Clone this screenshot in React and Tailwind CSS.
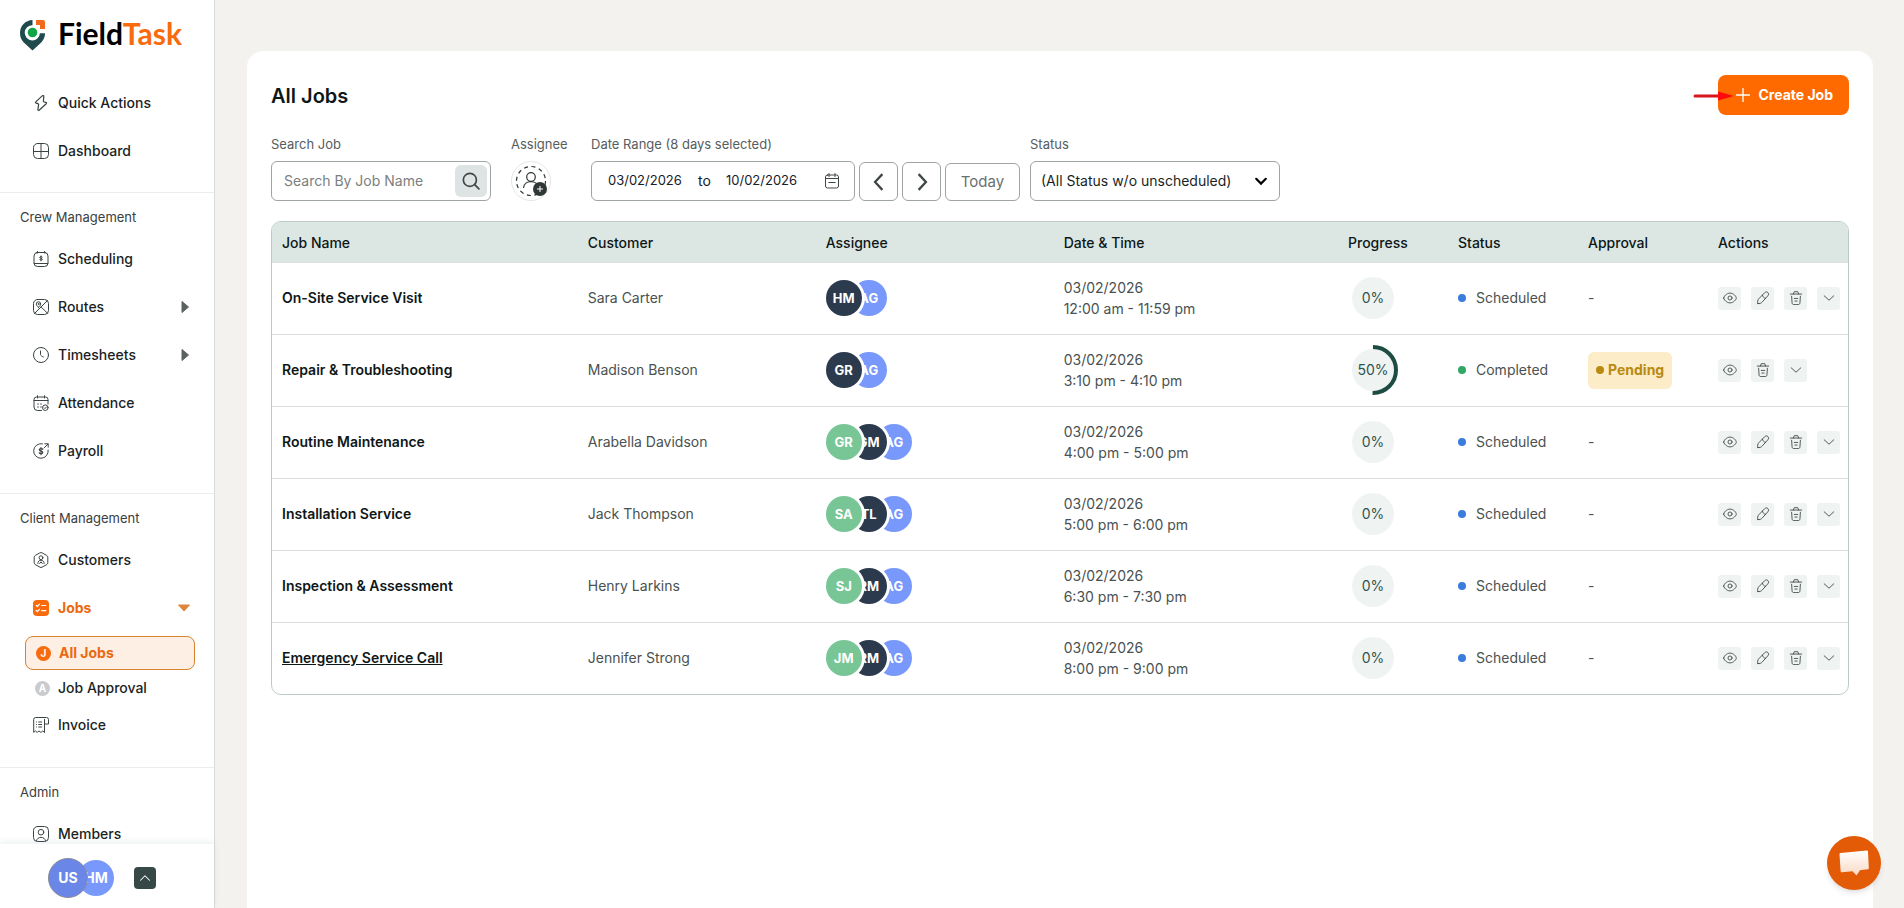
import { useState } from 'react';
import clsx from 'clsx';

/* ---------- Icons ---------- */

function Icon({ children, size = 16, className }) {
  return (
    <svg
      width={size}
      height={size}
      viewBox="0 0 16 16"
      fill="none"
      stroke="currentColor"
      strokeWidth="1"
      strokeLinecap="round"
      strokeLinejoin="round"
      className={clsx('shrink-0', className)}
      aria-hidden="true"
    >
      {children}
    </svg>
  );
}

const BoltIcon = () => (
  <Icon>
    <path
      strokeWidth="1.200"
      d="M9.200.9 2.800 6.900c-.5.5-.3 1.100.3 1.300l1.900.5c.5.1.7.5.6 1L4.900 14.300c-.2 1 .7 1.400 1.500.7l6.800-6.300c.5-.5.4-1.100-.3-1.300l-1.900-.4c-.5-.1-.7-.5-.6-1L10.800 1.600c.1-1-.9-1.400-1.600-.7Z"
    />
  </Icon>
);

const GridIcon = () => (
  <Icon>
    <rect x=".5" y=".5" width="15" height="15" rx="4" />
    <path d="M8 .5v15M.5 8.500h15" />
  </Icon>
);

const ScheduleIcon = () => (
  <Icon>
    <rect x="1" y="1.500" width="14" height="14" rx="3.500" />
    <path d="M1.200 12.500h13.600M3.500 1.500h2M10.500 1.500h2M4.500.5v1.500M11.500.5v1.500" />
    <path d="M9.300 6c-.3-.6-2.600-.7-2.600.4 0 1.200 2.700.7 2.700 1.900 0 1.100-2.500 1-2.800.3M8 5v4.800" />
  </Icon>
);

const RoutesIcon = () => (
  <Icon>
    <rect x=".5" y=".5" width="15" height="15" rx="4" />
    <path d="M1.800 14.200 14.200 1.800M8.200 8l6.300 6.300" />
    <path d="M5.500 8.300C4.300 7.300 3.300 6.300 3.300 5a2.200 2.200 0 0 1 4.400 0c0 1.300-1 2.300-2.200 3.300Z" />
    <circle cx="5.500" cy="5" r=".5" />
  </Icon>
);

const ClockIcon = () => (
  <Icon>
    <circle cx="8" cy="8" r="7.500" />
    <path d="M7.500 4v3.700c0 .8 2 1.800 2.900 2.300" />
  </Icon>
);

const AttendanceIcon = () => (
  <Icon>
    <path d="M8.500 15.500h-4A3.500 3.500 0 0 1 1 12V4.500A2.500 2.500 0 0 1 3.500 2h9A2.500 2.500 0 0 1 15 4.500V9M1 5.500h14M4.500.7V3M11.500.7V3" />
    <path strokeWidth="1.400" d="M5 9h.01M8 9h.01M5 12h.01M8 12h.01" />
    <circle cx="12.300" cy="12.700" r="2.800" />
    <path d="m11.200 12.800.8.800 1.500-1.700" />
  </Icon>
);

const PayrollIcon = () => (
  <Icon>
    <path d="M9.500.8A7.300 7.300 0 1 0 15.200 7M11 5l4-4M11.800.8H15.200V4.200" />
    <path strokeWidth="1.200" d="M9.800 6.300C9.400 5.200 6.300 5.100 6.300 6.800c0 1.800 3.500.9 3.500 2.700 0 1.600-3.200 1.500-3.600.2M8 4.500v7.200" />
  </Icon>
);

const CustomerIcon = () => (
  <Icon>
    <path d="M7 .8a2 2 0 0 1 2 0l4.800 2.700a2 2 0 0 1 1 1.700v5.600a2 2 0 0 1-1 1.700L9 15.200a2 2 0 0 1-2 0l-4.800-2.700a2 2 0 0 1-1-1.700V5.200a2 2 0 0 1 1-1.700Z" />
    <circle cx="8" cy="5.700" r="1.900" />
    <path d="M4.800 11.500c0-4.500 6.400-4.500 6.400 0M6.700 11.500 8 9.800l1.300 1.700" />
  </Icon>
);

const JobsIcon = () => (
  <svg width="16" height="16" viewBox="0 0 16 16" className="shrink-0" aria-hidden="true">
    <rect width="16" height="16" rx="4" fill="#f96a0c" />
    <path
      d="m3.200 5.300 1.200 1.200 2-2.300M8.500 5.500h4.300M3.200 10.500l1.200 1.200 2-2.300M8.500 10.700h4.300"
      fill="none"
      stroke="#fff"
      strokeWidth="1.200"
      strokeLinecap="round"
    />
  </svg>
);

const InvoiceIcon = () => (
  <Icon>
    <path d="M11.500 15.300 9.700 14l-1.800 1.400L6 14l-1.800 1.400L2.500 14 .7 15.300V2.500a2 2 0 0 1 2-2h10.800a2 2 0 0 1 2 2V7h-4V2.500M11.500 2.500v12.800" />
    <path d="M3.500 5h.01M3.500 7.500h.01M3.500 10h.01M5.700 5h3M5.700 7.500h3M5.700 10h3" />
  </Icon>
);

const MemberIcon = () => (
  <Icon>
    <rect x=".5" y=".5" width="15" height="15" rx="4" />
    <circle cx="8" cy="6.200" r="2.800" />
    <path d="M3.500 15c.4-5 8.600-5 9 0" />
  </Icon>
);

const LetterIcon = ({ letter, active }) => (
  <span
    className={clsx(
      'flex size-[15px] items-center justify-center rounded-full text-[10px] font-bold text-white',
      active ? 'bg-[#f96a0c]' : 'bg-[#c9cbcd]'
    )}
  >
    {letter}
  </span>
);

const EyeIcon = () => (
  <Icon size={14}>
    <path d="M.8 8c0-1.700 3.200-5.600 7.200-5.600s7.200 3.900 7.200 5.600-3.200 5.600-7.200 5.600S.8 9.700.8 8Z" />
    <circle cx="8" cy="8" r="2.300" />
  </Icon>
);

const PenIcon = () => (
  <Icon size={14}>
    <path d="M2.200 14.400c-.8-2.300-.3-4.200 1-5.500l6.600-6.900c1.200-1.200 2.600-1.300 3.700-.3s1.100 2.600 0 3.800L7.100 12.600c-1.300 1.500-2.900 2-4.900 1.800ZM7.300 4.800c.5 2 1.600 3.200 3.700 3.700" />
  </Icon>
);

const TrashIcon = () => (
  <Icon size={14}>
    <path d="M1.500 3.500h13M5 3.500 6 .8h4l1 2.700M3 6l.5 7.500c.1 1.300.8 2 2 2h5c1.200 0 1.900-.7 2-2L13 6M6 8.500h4M6.700 11.500h2.600" />
  </Icon>
);

const DownIcon = () => (
  <Icon size={14}>
    <path d="m2.500 5.500 5.500 5 5.500-5" />
  </Icon>
);

const LogoMark = () => (
  <svg width="26" height="31" viewBox="0 0 26 31" aria-hidden="true">
    <path
      d="M12.500 0v5.200a7.600 7.600 0 1 0 7.400 8h5.100c0 4-1.300 6.500-3.500 9L12.500 30.500 3.500 22.200C1.300 19.700 0 17 0 13 0 5.800 5.300.3 12.500 0Z"
      fill="#204b4d"
    />
    <circle cx="12.500" cy="12.500" r="4.800" fill="#10a648" />
    <path d="M16 0h7a2 2 0 0 1 2 2v7h-5V5h-4Z" fill="#f26a1b" />
  </svg>
);

/* ---------- Sidebar ---------- */

const crewItems = [
  { label: 'Scheduling', icon: <ScheduleIcon /> },
  { label: 'Routes', icon: <RoutesIcon />, caret: true },
  { label: 'Timesheets', icon: <ClockIcon />, caret: true },
  { label: 'Attendance', icon: <AttendanceIcon /> },
  { label: 'Payroll', icon: <PayrollIcon /> },
];

function NavItem({ icon, label, caret, active }) {
  return (
    <a
      href="#"
      className={clsx(
        'flex h-12 items-center gap-[9px] pr-6 pl-[33px] text-sm',
        active ? 'font-bold text-[#ea6a12]' : 'font-medium text-[#1b1f1f]'
      )}
    >
      <span className={active ? 'text-[#f96a0c]' : 'text-[#3b4343]'}>{icon}</span>
      <span className="flex-1">{label}</span>
      {caret && (
        <svg width="8" height="12" viewBox="0 0 8 12" className="mr-px text-[#5a6262]" aria-hidden="true">
          <path d="M1 0.500 7.500 6 1 11.500Z" fill="currentColor" stroke="currentColor" strokeLinejoin="round" />
        </svg>
      )}
      {active && (
        <svg width="12" height="8" viewBox="0 0 12 8" className="text-[#e0863c]" aria-hidden="true">
          <path d="M.5 1h11L6 7Z" fill="currentColor" stroke="currentColor" strokeLinejoin="round" />
        </svg>
      )}
    </a>
  );
}

function NavSection({ title, children }) {
  return (
    <section className="border-t border-[#ececec] pt-3.5 pb-[18px]">
      <h2 className="mb-2 px-5 text-[13px] leading-5 text-[#3a4040]">{title}</h2>
      {children}
    </section>
  );
}

function Sidebar() {
  return (
    <aside className="flex w-[215px] shrink-0 flex-col border-r border-[#d9dadb] bg-white">
      <a href="#" className="flex h-[70px] shrink-0 items-center gap-3 pl-5">
        <LogoMark />
        <span className="pb-1 font-[Lato] text-[30px] leading-none font-bold text-black">
          Field<span className="text-[#f96a0c]">Task</span>
        </span>
      </a>
      <nav className="min-h-0 flex-1 overflow-hidden pt-[9px]">
        <div className="pb-[17px]">
          <NavItem icon={<BoltIcon />} label="Quick Actions" />
          <NavItem icon={<GridIcon />} label="Dashboard" />
        </div>
        <NavSection title="Crew Management">
          {crewItems.map((item) => (
            <NavItem key={item.label} {...item} />
          ))}
        </NavSection>
        <NavSection title="Client Management">
          <NavItem icon={<CustomerIcon />} label="Customers" />
          <NavItem icon={<JobsIcon />} label="Jobs" active />
          <div className="-mb-0.5 pt-1 pr-[19px] pl-[25px]">
            <a
              href="#"
              className="flex h-[34px] items-center gap-2 rounded-lg border border-[#d9822f] bg-[#feefe5] pl-2.5 text-sm font-bold text-[#ea6a12]"
            >
              <LetterIcon letter="J" active />
              All Jobs
            </a>
            <a href="#" className="flex h-[33px] items-center gap-2 pt-[3px] pl-2.5 text-sm font-medium text-[#1b1f1f]">
              <LetterIcon letter="A" />
              Job Approval
            </a>
          </div>
          <NavItem icon={<InvoiceIcon />} label="Invoice" />
        </NavSection>
        <NavSection title="Admin">
          <NavItem icon={<MemberIcon />} label="Members" />
        </NavSection>
      </nav>
      <div className="z-10 flex h-16 items-center bg-white pt-1 pl-12 shadow-[0_-2px_6px_rgba(120,150,160,0.15)]">
        <span className="z-10 flex size-10 items-center justify-center rounded-full border border-[#8b8a9c] bg-[#6a87e8] text-sm font-bold text-white">
          US
        </span>
        <span className="-ml-2.5 flex size-9 items-center justify-center rounded-full bg-[#7898fb] text-sm font-bold text-white">
          HM
        </span>
        <button
          type="button"
          aria-label="Expand accounts"
          className="ml-5 flex size-[22px] items-center justify-center rounded-[4px] bg-[#374947] text-white"
        >
          <Icon size={12}>
            <path strokeWidth="1.400" d="m2 11 6-6 6 6" />
          </Icon>
        </button>
      </div>
    </aside>
  );
}

/* ---------- Filters ---------- */

function Field({ label, htmlFor, children }) {
  return (
    <div>
      <label htmlFor={htmlFor} className="mb-[7px] block text-[13px] leading-5 text-[#565d5d]">
        {label}
      </label>
      {children}
    </div>
  );
}

function StepButton({ label, d }) {
  return (
    <button
      type="button"
      aria-label={label}
      className="flex size-[39px] items-center justify-center rounded-md border border-[#9ea3a3] text-[#3f4646]"
    >
      <Icon size={18}>
        <path strokeWidth="2" strokeLinecap="butt" strokeLinejoin="miter" d={d} />
      </Icon>
    </button>
  );
}

function Filters() {
  const [search, setSearch] = useState('');
  const [from, setFrom] = useState('03/02/2026');
  const [to, setTo] = useState('10/02/2026');

  return (
    <div className="mt-[19px] flex flex-wrap items-end">
      <Field label="Search Job" htmlFor="search">
        <div className="flex h-10 w-[220px] items-center rounded-md border border-[#9ea3a3] pr-[3px] pl-3">
          <input
            id="search"
            value={search}
            onChange={(e) => setSearch(e.target.value)}
            placeholder="Search By Job Name"
            className="min-w-0 flex-1 text-sm outline-none placeholder:text-[#7b8080]"
          />
          <button
            type="button"
            aria-label="Search"
            className="flex size-8 items-center justify-center rounded-md bg-[#dde4e3] text-[#3f4646]"
          >
            <Icon size={18}>
              <circle cx="7" cy="7" r="5.800" strokeWidth="1.500" />
              <path strokeWidth="1.500" d="m11.300 11.300 3.700 3.700" />
            </Icon>
          </button>
        </div>
      </Field>

      <div className="ml-5 w-20">
        <Field label="Assignee" htmlFor="assignee">
          <button
            id="assignee"
            type="button"
            className="flex size-10 items-center justify-center rounded-full border border-[#e4e7e7]"
          >
            <svg width="34" height="34" viewBox="0 0 34 34" fill="none" aria-hidden="true">
              <circle cx="17" cy="17" r="14.500" stroke="#2f3636" strokeWidth="1.200" strokeDasharray="4 3.600" />
              <circle cx="17" cy="13" r="4.300" stroke="#2f3636" strokeWidth="1.200" />
              <path d="M9.500 24c.5-8.500 14.500-8.500 15 0" stroke="#2f3636" strokeWidth="1.200" />
              <circle cx="26" cy="25" r="7" fill="#2f3636" />
              <path d="M26 22v6M23 25h6" stroke="#fff" strokeWidth="1" />
            </svg>
          </button>
        </Field>
      </div>

      <Field label="Date Range (8 days selected)" htmlFor="from">
        <div className="flex items-end gap-1">
          <div className="flex h-10 w-[264px] items-center rounded-md border border-[#9ea3a3] pr-3.5 pl-4 text-[13px] text-[#16202a]">
            <input
              id="from"
              value={from}
              onChange={(e) => setFrom(e.target.value)}
              className="w-[90px] outline-none"
            />
            <label htmlFor="to" className="w-7 text-sm">
              to
            </label>
            <input id="to" value={to} onChange={(e) => setTo(e.target.value)} className="w-20 outline-none" />
            <Icon size={16} className="ml-auto text-[#3f4646]">
              <rect x="1.500" y="2" width="13" height="13" rx="2" />
              <path d="M1.500 5.500h13M5 .5v3M11 .5v3M4.800 9.500h6.400" />
            </Icon>
          </div>
          <StepButton label="Previous" d="M11 1 4.500 8l6.500 7" />
          <StepButton label="Next" d="m5 1 6.500 7L5 15" />
          <button
            type="button"
            className="h-[38px] w-[75px] rounded-md border border-[#9ea3a3] text-[15px] text-[#6a7070]"
          >
            Today
          </button>
        </div>
      </Field>

      <div className="ml-2.5">
        <Field label="Status" htmlFor="status">
          <div className="relative">
            <select
              id="status"
              className="h-10 w-[250px] appearance-none rounded-md border border-[#9ea3a3] bg-white pl-2.5 text-sm text-[#1b1f1f]"
            >
              <option>(All Status w/o unscheduled)</option>
              <option>Scheduled</option>
              <option>Completed</option>
            </select>
            <Icon size={14} className="pointer-events-none absolute top-[13px] right-3 text-black">
              <path strokeWidth="2.500" strokeLinejoin="miter" d="m2.500 5.500 5.500 5.500 5.500-5.500" />
            </Icon>
          </div>
        </Field>
      </div>
    </div>
  );
}

/* ---------- Table ---------- */

const jobs = [
  {
    name: 'On-Site Service Visit',
    customer: 'Sara Carter',
    team: ['HM', 'AG'],
    time: '12:00 am - 11:59 pm',
  },
  {
    name: 'Repair & Troubleshooting',
    customer: 'Madison Benson',
    team: ['GR', 'AG'],
    time: '3:10 pm - 4:10 pm',
    progress: 50,
    status: 'Completed',
    approval: 'Pending',
  },
  {
    name: 'Routine Maintenance',
    customer: 'Arabella Davidson',
    team: ['GR', 'GM', 'AG'],
    time: '4:00 pm - 5:00 pm',
  },
  {
    name: 'Installation Service',
    customer: 'Jack Thompson',
    team: ['SA', 'TL', 'AG'],
    time: '5:00 pm - 6:00 pm',
  },
  {
    name: 'Inspection & Assessment',
    customer: 'Henry Larkins',
    team: ['SJ', 'RM', 'AG'],
    time: '6:30 pm - 7:30 pm',
  },
  {
    name: 'Emergency Service Call',
    customer: 'Jennifer Strong',
    team: ['JM', 'RM', 'AG'],
    time: '8:00 pm - 9:00 pm',
    hovered: true,
  },
];

const avatarColors = ['bg-[#7898fb]', 'bg-[#2b3a4d]', 'bg-[#78c695]'];
const avatarLayers = ['z-30', 'z-20', 'z-10'];

function Team({ members }) {
  return (
    <div className="isolate flex">
      {members.map((initials, i) => (
        <span
          key={i}
          className={clsx(
            'relative flex size-9 items-center justify-center rounded-full text-[13px] font-bold text-white ring-3 ring-white',
            i > 0 && '-ml-[11px]',
            avatarLayers[i],
            avatarColors[members.length - 1 - i]
          )}
        >
          {initials}
        </span>
      ))}
    </div>
  );
}

function Progress({ value }) {
  const length = 2 * Math.PI * 23;
  return (
    <div className="relative flex size-[50px] items-center justify-center">
      <svg width="50" height="50" viewBox="0 0 50 50" className="absolute inset-0" aria-hidden="true">
        <circle cx="25" cy="25" r="21" fill="#eff3f2" />
        {value > 0 && (
          <circle
            cx="25"
            cy="25"
            r="23"
            fill="none"
            stroke="#1d4d42"
            strokeWidth="4"
            strokeDasharray={`${(length * value) / 100} ${length}`}
            transform="rotate(-90 25 25)"
          />
        )}
      </svg>
      <span className="relative text-sm text-[#2f5550]">{value}%</span>
    </div>
  );
}

function ActionButton({ label, children }) {
  return (
    <button
      type="button"
      aria-label={label}
      className="flex size-[23px] items-center justify-center rounded-[3px] bg-[#eff3f2] text-[#3f4646]"
    >
      {children}
    </button>
  );
}

function JobRow({ job }) {
  const { progress = 0, status = 'Scheduled' } = job;
  return (
    <tr className="h-18 border-t border-[#dcdfe1] text-[#4a5151]">
      <td className="px-2.5">
        <a href="#" className={clsx('font-semibold text-[#0e1717]', job.hovered && 'underline')}>
          {job.name}
        </a>
      </td>
      <td className="px-2.5">{job.customer}</td>
      <td className="px-2.5">
        <Team members={job.team} />
      </td>
      <td className="px-2.5 leading-[21px]">
        03/02/2026
        <br />
        {job.time}
      </td>
      <td className="px-2.5">
        <Progress value={progress} />
      </td>
      <td className="px-2.5">
        <span className="flex items-center gap-2.5">
          <span
            className={clsx('size-2 rounded-full', status === 'Completed' ? 'bg-[#2fa866]' : 'bg-[#3b7ddd]')}
          />
          {status}
        </span>
      </td>
      <td className="px-2.5">
        {job.approval ? (
          <span className="inline-flex h-[37px] items-center gap-1 rounded-md bg-[#fcecc8] px-2 font-bold text-[#b98a10]">
            <span className="size-2 rounded-full bg-[#b98a10]" />
            {job.approval}
          </span>
        ) : (
          '-'
        )}
      </td>
      <td className="pl-2.5">
        <div className="flex gap-2.5">
          <ActionButton label="View">
            <EyeIcon />
          </ActionButton>
          {status !== 'Completed' && (
            <ActionButton label="Edit">
              <PenIcon />
            </ActionButton>
          )}
          <ActionButton label="Delete">
            <TrashIcon />
          </ActionButton>
          <ActionButton label="More">
            <DownIcon />
          </ActionButton>
        </div>
      </td>
    </tr>
  );
}

function JobsTable() {
  return (
    <div className="mt-5 overflow-hidden rounded-[10px] border border-[#bccbc9]">
      <table className="w-full table-fixed text-left text-sm">
        <colgroup>
          <col className="w-[19.4%]" />
          <col className="w-[15.1%]" />
          <col className="w-[15.1%]" />
          <col />
          <col className="w-[110px]" />
          <col className="w-[130px]" />
          <col className="w-[130px]" />
          <col className="w-[140px]" />
        </colgroup>
        <thead>
          <tr className="h-10 bg-[#dce7e4] text-[#0e1717]">
            {['Job Name', 'Customer', 'Assignee', 'Date & Time', 'Progress', 'Status', 'Approval', 'Actions'].map(
              (title) => (
                <th key={title} className="px-2.5 pt-0.5 font-medium">
                  {title}
                </th>
              )
            )}
          </tr>
        </thead>
        <tbody>
          {jobs.map((job) => (
            <JobRow key={job.name} job={job} />
          ))}
        </tbody>
      </table>
    </div>
  );
}

/* ---------- Page ---------- */

export default function App() {
  return (
    <div className="flex h-screen overflow-hidden bg-[#f3f2ee] font-[Inter,sans-serif]">
      <Sidebar />
      <main className="flex min-w-0 flex-1 flex-col pt-[51px] pr-[31px] pl-8">
        <div className="flex-1 rounded-t-2xl bg-white p-6">
          <header className="flex items-center justify-between">
            <h1 className="pt-0.5 text-xl font-semibold text-[#0e1717]">All Jobs</h1>
            <div className="relative">
              <button
                type="button"
                className="flex h-10 items-center gap-2 rounded-lg bg-[#ff6a00] px-4 pl-[18px] text-sm font-bold text-white"
              >
                <Icon size={14}>
                  <path strokeWidth="1.500" d="M8 .5v15M.5 8h15" />
                </Icon>
                Create Job
              </button>
              <svg
                width="42"
                height="12"
                viewBox="0 0 42 12"
                className="absolute top-[15px] -left-[25px]"
                aria-hidden="true"
              >
                <path d="M2 6h24" stroke="#d8161b" strokeWidth="3" strokeLinecap="round" />
                <path d="M25 1.500 41 6l-16 4.500Z" fill="#ff0a0a" />
              </svg>
            </div>
          </header>
          <Filters />
          <JobsTable />
        </div>
      </main>
      <button
        type="button"
        aria-label="Open chat"
        className="fixed right-[23px] bottom-[18px] flex size-[54px] items-center justify-center rounded-full bg-[#e35b06] shadow-md"
      >
        <svg width="32" height="28" viewBox="0 0 32 28" aria-hidden="true">
          <defs>
            <linearGradient id="bubble" x1="0" y1="0" x2="0" y2="1">
              <stop offset="0" stopColor="#fff" />
              <stop offset="1" stopColor="#fbd9c4" />
            </linearGradient>
          </defs>
          <path
            d="M2.500 4 28.500 1.500c1 0 1.500.3 1.500 1.300l.8 16.200c0 .8-.3 1.200-1.200 1.300l-7.600.9-3.500 5.300-4-4.300-10.500 1c-.9 0-1.400-.3-1.400-1.200L1.500 5.300C1.500 4.500 1.700 4.100 2.500 4Z"
            fill="url(#bubble)"
          />
        </svg>
      </button>
    </div>
  );
}
